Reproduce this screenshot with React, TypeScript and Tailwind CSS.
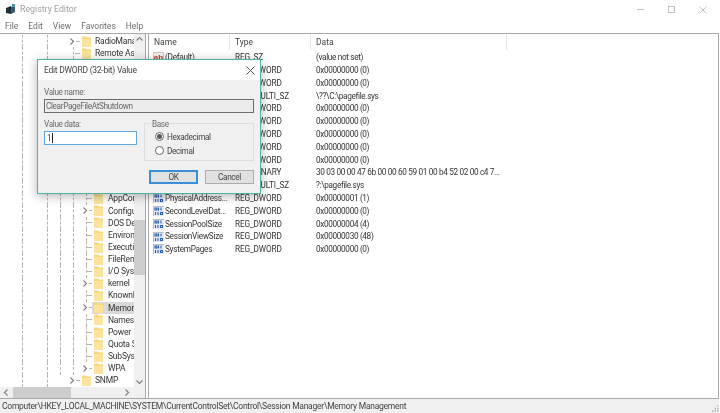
const font = "font-['Roboto','Open_Sans',sans-serif]"

const treeTop = [
  "RadioManagement",
  "Remote Assistance",
  "RetailDemo",
  "SafeBoot",
  "SAM",
  "ScEvents",
  "SCMConfig",
  "ScsiPort",
  "SecureBoot",
  "SecurePipeServers",
  "SecurityProviders",
  "ServiceGroupOrder",
  "Session Manager",
]

const sessionChildren = [
  { name: "AppCompatCache" },
  { name: "Configuration Manager", open: true },
  { name: "DOS Devices" },
  { name: "Environment" },
  { name: "Executive" },
  { name: "FileRenameOperations" },
  { name: "I/O System" },
  { name: "kernel", open: true },
  { name: "KnownDLLs" },
  { name: "Memory Management", open: true, selected: true },
  { name: "Namespace Separation" },
  { name: "Power" },
  { name: "Quota System" },
  { name: "SubSystems" },
  { name: "WPA", open: true },
]

const values = [
  ["(Default)", "REG_SZ", "(value not set)", "sz"],
  ["ClearPageFileAt...", "REG_DWORD", "0x00000000 (0)", "bin"],
  ["DisablePagingEx...", "REG_DWORD", "0x00000000 (0)", "bin"],
  ["ExistingPageFiles", "REG_MULTI_SZ", "\\??\\C:\\pagefile.sys", "sz"],
  ["FeatureSettings", "REG_DWORD", "0x00000000 (0)", "bin"],
  ["FeatureSettings...", "REG_DWORD", "0x00000000 (0)", "bin"],
  ["IoPageLockLimit", "REG_DWORD", "0x00000000 (0)", "bin"],
  ["LargeSystemCa...", "REG_DWORD", "0x00000000 (0)", "bin"],
  ["NonPagedPool...", "REG_DWORD", "0x00000000 (0)", "bin"],
  ["PagedPoolSize", "REG_BINARY", "30 03 00 00 47 6b 00 00 60 59 01 00 b4 52 02 00 c4 7...", "bin"],
  ["PagingFiles", "REG_MULTI_SZ", "?:\\pagefile.sys", "sz"],
  ["PhysicalAddress...", "REG_DWORD", "0x00000001 (1)", "bin"],
  ["SecondLevelDat...", "REG_DWORD", "0x00000000 (0)", "bin"],
  ["SessionPoolSize", "REG_DWORD", "0x00000004 (4)", "bin"],
  ["SessionViewSize", "REG_DWORD", "0x00000030 (48)", "bin"],
  ["SystemPages", "REG_DWORD", "0x00000000 (0)", "bin"],
]

function Folder() {
  return (
    <svg width="9" height="11" viewBox="0 0 9 11" className="shrink-0">
      <path d="M0 0.5H4L5 1.5H9V11H0Z" fill="#f7d67c" />
      <path d="M0 3H9V11H0Z" fill="#fce49f" />
    </svg>
  )
}

function Chevron({ dir }: { dir: "right" | "left" | "up" | "down" }) {
  const d = {
    right: "M1.5 0.5L4.5 3.5L1.5 6.5",
    left: "M4.5 0.5L1.5 3.5L4.5 6.5",
    up: "M0.5 4.5L3.5 1.5L6.5 4.5",
    down: "M0.5 2.5L3.5 5.5L6.5 2.5",
  }[dir]
  return (
    <svg width="7" height="7" viewBox="0 0 7 7" className="shrink-0">
      <path d={d} fill="none" stroke="#7d7d7d" strokeWidth="1.1" />
    </svg>
  )
}

function Guide({ w }: { w: string }) {
  return <div className={`h-full shrink-0 border-l border-dashed border-[#b5b5b5] ${w}`} />
}

function TreeGuides({ child }: { child?: boolean }) {
  return (
    <>
      <div className="w-[22px] shrink-0" />
      <Guide w="w-[25px]" />
      <Guide w="w-[13px]" />
      <Guide w="w-[13px]" />
      {child ? <Guide w="w-[13px]" /> : null}
    </>
  )
}

function TreeRow({ name, open, child, selected }: { name: string; open?: boolean; child?: boolean; selected?: boolean }) {
  return (
    <div className="flex h-[12.14px] shrink-0 items-center text-[8.5px] leading-none tracking-[-0.2px] whitespace-nowrap text-[#333]">
      {child ? (
        <TreeGuides child />
      ) : (
        <>
          <div className="w-[22px] shrink-0" />
          <Guide w="w-[25px]" />
          <Guide w="w-[13px]" />
          <div className="w-[13px] shrink-0" />
        </>
      )}
      <div className={`relative flex h-full shrink-0 items-center ${child ? "w-[6px]" : "w-[7px]"} ${open ? "" : "border-l border-dashed border-[#b5b5b5]"}`}>
        <div className="ml-auto w-[5px] border-t border-dashed border-[#b5b5b5]" />
        {open ? (
          <div className="absolute -left-[4px] flex items-center bg-white">
            <Chevron dir="right" />
          </div>
        ) : null}
      </div>
      <div className={`flex h-full flex-1 items-center pl-[2px] ${selected ? "bg-[#d9d9d9]" : ""}`}>
        <Folder />
        <span className={child ? "ml-[5px]" : "ml-[4px]"}>{name}</span>
      </div>
    </div>
  )
}

function BinaryIcon() {
  return (
    <svg width="11" height="10" viewBox="0 0 11 10" className="shrink-0">
      <rect x="0" y="0" width="11" height="10" fill="#e6ebf6" />
      <path d="M0.5 0V10M0 0.5H11" stroke="#b9bec9" strokeWidth="1" />
      <path d="M2 2H4V4H2ZM5.5 1.5V4.5M8 1.5V4.5" fill="none" stroke="#2a5db0" strokeWidth="1.1" />
      <path d="M2.5 6V9M5 6V9M7.5 6.5H9.5V8.5H7.5Z" fill="none" stroke="#2a5db0" strokeWidth="1.1" />
    </svg>
  )
}

function StringIcon() {
  return (
    <div className="flex h-[10px] w-[11px] shrink-0 items-center justify-center border border-b-0 border-[#d3c4c0] bg-[#f7eeea] font-['Liberation_Sans'] text-[8px] leading-none font-bold tracking-normal text-[#c0392b]">
      ab
    </div>
  )
}

function ValueRow({ name, type, data, icon }: { name: string; type: string; data: string; icon: string }) {
  return (
    <div className="flex h-[12.8px] shrink-0 items-center text-[8.2px] leading-none whitespace-nowrap text-[#333]">
      <div className="flex w-[81px] shrink-0 items-center gap-[1px] overflow-hidden pl-[4px]">
        {icon === "sz" ? <StringIcon /> : <BinaryIcon />}
        <span className="tracking-[-0.25px]">{name}</span>
      </div>
      <div className="w-[81px] shrink-0 pl-[5px] tracking-[-0.1px]">{type}</div>
      <div className="pl-[5px] tracking-[-0.33px]">{data}</div>
    </div>
  )
}

function HeaderCell({ w, children }: { w: string; children: React.ReactNode }) {
  return <div className={`flex h-full shrink-0 items-center border-r border-[#e5e5e5] pl-[5px] ${w}`}>{children}</div>
}

function Dialog() {
  return (
    <div className="absolute top-[59px] left-[37px] flex h-[135px] w-[224px] flex-col border border-[#4fb3a3] bg-[#f0f0f0] text-[8.2px] leading-none tracking-[-0.35px] text-[#444] shadow-[0_2px_10px_rgba(0,0,0,0.3)]">
      <div className="flex h-[20px] shrink-0 items-center justify-between bg-white pr-[5px] pl-[6px] text-[8.5px] tracking-[-0.25px] text-[#444]">
        <span>Edit DWORD (32-bit) Value</span>
        <svg width="9" height="9" viewBox="0 0 9 9">
          <path d="M0.5 0.5L8.5 8.5M8.5 0.5L0.5 8.5" stroke="#555" strokeWidth="1" />
        </svg>
      </div>
      <div className="flex flex-1 flex-col px-[6px] pt-[8px]">
        <div className="text-[#6a6a6a]">Value name:</div>
        <div className="mt-[3px] flex h-[14px] items-center border border-[#6b6b6b] bg-[#ececec] pl-[1px] text-[#666]">
          ClearPageFileAtShutdown
        </div>
        <div className="mt-[7px] flex gap-[7px]">
          <div className="w-[93px] shrink-0">
            <div className="text-[#6a6a6a]">Value data:</div>
            <div className="mt-[3px] flex h-[14px] items-center border border-[#62a8e0] bg-white pl-[2px] text-[#444]">
              1<span className="ml-px h-[10px] w-px bg-[#222]" />
            </div>
          </div>
          <div className="relative mt-[3px] h-[38px] flex-1 border border-[#dcdcdc]">
            <span className="absolute -top-[4px] left-[6px] bg-[#f0f0f0] px-[1px] text-[#6a6a6a]">Base</span>
            <div className="flex flex-col gap-[5px] pt-[8px] pl-[10px]">
              <div className="flex items-center gap-[3px]">
                <div className="flex h-[9px] w-[9px] items-center justify-center rounded-full border border-[#666] bg-white">
                  <div className="h-[5px] w-[5px] rounded-full bg-[#555]" />
                </div>
                Hexadecimal
              </div>
              <div className="flex items-center gap-[3px]">
                <div className="h-[9px] w-[9px] rounded-full border border-[#666] bg-white" />
                Decimal
              </div>
            </div>
          </div>
        </div>
        <div className="mt-[9px] flex justify-end gap-[7px]">
          <div className="flex h-[14px] w-[49px] items-center justify-center border-2 border-[#3a8fd6] bg-[#e1e1e1]">OK</div>
          <div className="flex h-[14px] w-[49px] items-center justify-center border border-[#adadad] bg-[#e1e1e1]">Cancel</div>
        </div>
      </div>
    </div>
  )
}

export default function App() {
  return (
    <div className={`relative flex h-[413px] w-[719px] flex-col overflow-hidden bg-white blur-[0.25px] ${font}`}>
      {/* title bar */}
      <div className="flex h-[19px] shrink-0 items-center pl-[5px]">
        <svg width="11" height="11" viewBox="0 0 11 11">
          <path d="M1 4L6 2L6 10L1 9Z" fill="#1f2f3a" />
          <path d="M6 3L10 1.5L10 8L6 10Z" fill="#35586e" />
          <path d="M7 0H10V3H7Z" fill="#4b97a5" />
        </svg>
        <span className="ml-[4px] text-[8.8px] leading-none text-[#a0a0a0]">Registry Editor</span>
        <div className="ml-auto flex items-center pr-[12px]">
          <div className="h-px w-[7px] bg-[#c0c0c0]" />
          <div className="ml-[24px] h-[7px] w-[7px] border border-[#c0c0c0]" />
          <svg width="8" height="8" viewBox="0 0 8 8" className="ml-[24px]">
            <path d="M0.5 0.5L7.5 7.5M7.5 0.5L0.5 7.5" stroke="#c0c0c0" strokeWidth="1" />
          </svg>
        </div>
      </div>

      {/* menu */}
      <div className="flex h-[14px] shrink-0 items-center gap-[10px] pl-[5px] text-[8.5px] leading-none text-[#6e6e6e]">
        <span>File</span>
        <span>Edit</span>
        <span>View</span>
        <span>Favorites</span>
        <span>Help</span>
      </div>

      {/* panes */}
      <div className="flex min-h-0 flex-1 border-t border-[#a8a8a8]">
        <div className="flex w-[146px] shrink-0 flex-col border-r border-[#a8a8a8]">
          <div className="flex min-h-0 flex-1">
            <div className="flex w-[134px] shrink-0 flex-col overflow-hidden pt-[1px]">
              {treeTop.map((name, i) => (
                <TreeRow key={name} name={name} open={i === 0} />
              ))}
              {sessionChildren.map((item) => (
                <TreeRow key={item.name} name={item.name} open={item.open} selected={item.selected} child />
              ))}
              <TreeRow name="SNMP" open />
              <div className="flex min-h-0 flex-1">
                <TreeGuides />
              </div>
            </div>
            <div className="flex w-[11px] shrink-0 flex-col items-center bg-[#f0f0f0]">
              <div className="flex h-[11px] shrink-0 items-center">
                <Chevron dir="up" />
              </div>
              <div className="mt-[175px] h-[55px] w-full shrink-0 bg-[#cdcdcd]" />
              <div className="mt-auto flex h-[11px] shrink-0 items-center">
                <Chevron dir="down" />
              </div>
            </div>
          </div>
          <div className="flex h-[11px] shrink-0 items-center bg-[#f0f0f0] pr-[14px]">
            <div className="flex w-[13px] justify-center">
              <Chevron dir="left" />
            </div>
            <div className="h-full w-[58px] bg-[#cdcdcd]" />
            <div className="ml-auto">
              <Chevron dir="right" />
            </div>
          </div>
        </div>

        <div className="ml-[2px] flex flex-1 flex-col border-x border-[#a8a8a8]">
          <div className="flex h-[16px] shrink-0 items-center text-[8.5px] leading-none text-[#444]">
            <HeaderCell w="w-[81px]">Name</HeaderCell>
            <HeaderCell w="w-[81px]">Type</HeaderCell>
            <HeaderCell w="w-[196px]">Data</HeaderCell>
          </div>
          <div className="h-px shrink-0" />
          {values.map(([name, type, data, icon]) => (
            <ValueRow key={name} name={name} type={type} data={data} icon={icon} />
          ))}
        </div>
      </div>

      {/* status bar */}
      <div className="relative flex h-[15px] shrink-0 items-center border-t border-[#a8a8a8] bg-[#f0f0f0] pt-[1px] pl-[2px] text-[8.5px] leading-none tracking-[-0.25px] text-[#444]">
        Computer\HKEY_LOCAL_MACHINE\SYSTEM\CurrentControlSet\Control\Session Manager\Memory Management
        <svg width="8" height="8" viewBox="0 0 8 8" className="absolute right-0 bottom-0">
          <path d="M6 1H7.5M3.5 3.5H5M6 3.5H7.5M1 6H2.5M3.5 6H5M6 6H7.5" stroke="#b5b5b5" strokeWidth="1.5" />
        </svg>
      </div>

      <Dialog />
    </div>
  )
}
